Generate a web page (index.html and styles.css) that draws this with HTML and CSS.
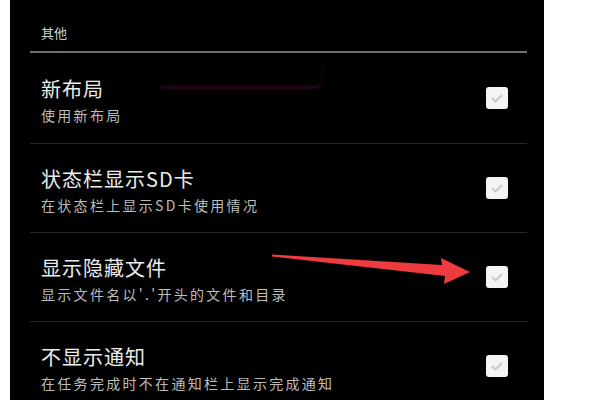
FILE: index.html
```html
<!DOCTYPE html>
<html lang="zh">
<head>
<meta charset="utf-8">
<link rel="stylesheet" href="styles.css">
</head>
<body>
<div class="panel">
  <div class="list">
    <div class="header">其他</div>
    <div class="row first">
      <div class="texts">
        <div class="title">新布局</div>
        <div class="sub">使用新布局</div>
      </div>
      <span class="check"><svg viewBox="0 0 22 22" width="22" height="22"><path d="M6.5 11.5 L9.5 14.5 L15.5 8.5" fill="none" stroke="#c9c9c9" stroke-width="2" stroke-linecap="round" stroke-linejoin="round"/></svg></span>
    </div>
    <div class="row">
      <div class="texts">
        <div class="title">状态栏显示SD卡</div>
        <div class="sub">在状态栏上显示SD卡使用情况</div>
      </div>
      <span class="check"><svg viewBox="0 0 22 22" width="22" height="22"><path d="M6.5 11.5 L9.5 14.5 L15.5 8.5" fill="none" stroke="#c9c9c9" stroke-width="2" stroke-linecap="round" stroke-linejoin="round"/></svg></span>
    </div>
    <div class="row">
      <div class="texts">
        <div class="title">显示隐藏文件</div>
        <div class="sub">显示文件名以'.'开头的文件和目录</div>
      </div>
      <span class="check"><svg viewBox="0 0 22 22" width="22" height="22"><path d="M6.5 11.5 L9.5 14.5 L15.5 8.5" fill="none" stroke="#c9c9c9" stroke-width="2" stroke-linecap="round" stroke-linejoin="round"/></svg></span>
    </div>
    <div class="row">
      <div class="texts">
        <div class="title">不显示通知</div>
        <div class="sub">在任务完成时不在通知栏上显示完成通知</div>
      </div>
      <span class="check"><svg viewBox="0 0 22 22" width="22" height="22"><path d="M6.5 11.5 L9.5 14.5 L15.5 8.5" fill="none" stroke="#c9c9c9" stroke-width="2" stroke-linecap="round" stroke-linejoin="round"/></svg></span>
    </div>
  </div>
  <div class="glow"></div>
  <svg class="arrow" width="600" height="400" viewBox="0 0 600 400">
    <polygon points="272,254.5 442,265 441,258 470,272 444,284 445,276 272,256.5" fill="#ee3b3f"/>
  </svg>
</div>
</body>
</html>
```

FILE: styles.css
```css
html, body {
  margin: 0;
  padding: 0;
  background: #fff;
}
body {
  font-family: "Noto Sans CJK SC", "Noto Sans", sans-serif;
  width: 600px;
  height: 400px;
  overflow: hidden;
}
.panel {
  position: relative;
  margin-left: 10px;
  width: 534px;
  height: 400px;
  background: #000;
  overflow: hidden;
}
.list {
  margin: 0 17px 0 20px;
}
.header {
  height: 53px;
  box-sizing: border-box;
  padding: 23px 0 0 11px;
  font-size: 13px;
  line-height: 20px;
  color: #cfcfcf;
  border-bottom: 2px solid #707070;
}
.row {
  display: flex;
  align-items: center;
  justify-content: space-between;
  height: 89px;
  box-sizing: border-box;
  padding: 0 19px 0 11px;
  border-bottom: 1px solid #262626;
}
.row.first {
  height: 91px;
}
.texts {
  padding-top: 4px;
}
.title {
  font-size: 20px;
  line-height: 24px;
  letter-spacing: 1px;
  color: #ececec;
}
.sub {
  margin-top: 5px;
  font-size: 14px;
  line-height: 18px;
  letter-spacing: 2.3px;
  color: #bdbdbd;
}
.check {
  width: 22px;
  height: 22px;
  border-radius: 3px;
  background: #f4f4f4;
  display: flex;
}
.glow {
  position: absolute;
  left: 150px;
  top: 60px;
  width: 162px;
  height: 26px;
  border-right: 1px solid rgba(110, 10, 60, 0.25);
  border-bottom: 3px solid rgba(150, 20, 90, 0.3);
  border-bottom-right-radius: 10px;
  filter: blur(1.2px);
}
.arrow {
  position: absolute;
  left: -10px;
  top: 0;
}
```
